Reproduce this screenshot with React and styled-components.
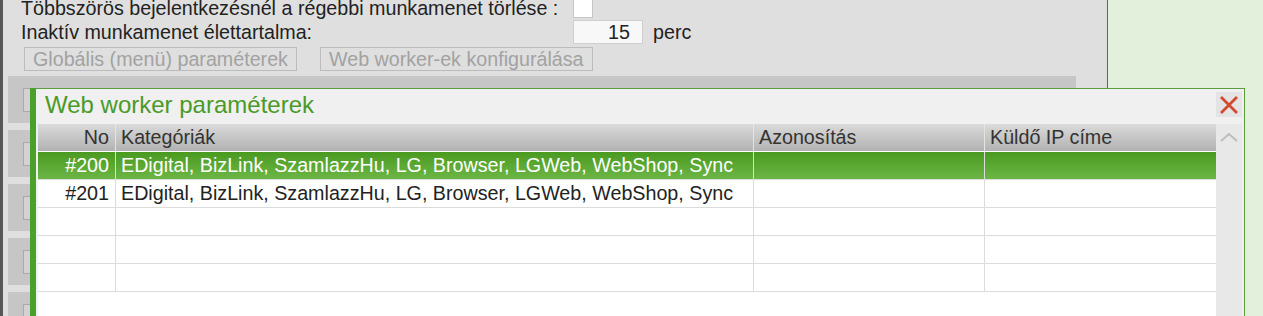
import styled, { createGlobalStyle } from 'styled-components';

const GlobalStyle = createGlobalStyle`
    html, body {
        margin: 0;
        padding: 0;
        overflow: hidden;
    }
    body {
        font-family: 'Liberation Sans', Arial, sans-serif;
        color: #222;
    }
`;

const Page = styled.div`
    position: relative;
    display: flex;
    width: 1263px;
    height: 316px;
    overflow: hidden;
    background: #e2f0dc;
`;

const Strip = styled.div`
    width: 3px;
    flex: none;
    background: #565656;
`;

const Panel = styled.div`
    width: 1105px;
    flex: none;
    background: #dfdfdf;
    border-right: 1px solid #5e6a5e;
    padding-left: 5px;
    box-sizing: border-box;
    display: flex;
    flex-direction: column;
`;

const Form = styled.div`
    margin-top: -4px;
    padding-left: 13px;
    display: grid;
    grid-template-columns: 552px auto;
    grid-auto-rows: 24px;
    align-items: center;
    font-size: 19.7px;
`;

const Label = styled.div`
    white-space: nowrap;
`;

const Field = styled.div`
    display: flex;
    align-items: center;
    gap: 10px;
`;

const Check = styled.div`
    width: 18px;
    height: 18px;
    background: #fff;
    border: 1px solid #c4c4c4;
`;

const NumberBox = styled.div`
    width: 70px;
    height: 24px;
    box-sizing: border-box;
    background: #f8f8f8;
    border: 1px solid #cfcfcf;
    text-align: right;
    padding-right: 12px;
    line-height: 22px;
`;

const Buttons = styled.div`
    display: flex;
    gap: 23px;
    padding: 3px 0 0 16px;
`;

const GhostButton = styled.div`
    height: 24px;
    box-sizing: border-box;
    border: 1px solid #bcbcbc;
    color: #a2a2a2;
    font-size: 19.7px;
    line-height: 22px;
    padding: 0 8px;
    white-space: nowrap;
`;

const Cards = styled.div`
    display: flex;
    flex-direction: column;
    gap: 7px;
    margin-top: 5px;
`;

const Card = styled.div`
    width: 1068px;
    height: 47px;
    flex: none;
    background: #c6c6c6;
    padding: 12px 0 0 15px;
    box-sizing: border-box;
`;

const CardField = styled.div`
    width: 200px;
    height: 24px;
    box-sizing: border-box;
    border: 1px solid #a9a9a9;
    background: #d2d2d2;
`;

const Green = styled.div`
    flex: 1;
`;

const Modal = styled.div`
    position: absolute;
    left: 30px;
    top: 88px;
    width: 1215px;
    height: 240px;
    box-sizing: border-box;
    background: #f0f0f0;
    border-left: 6px solid #4b9f2b;
    border-top: 1px solid #5b9c3c;
    border-right: 1px solid #5b9c3c;
    padding: 0 2px;
    display: flex;
    flex-direction: column;
`;

const TitleBar = styled.div`
    height: 35px;
    flex: none;
    display: flex;
    align-items: center;
    justify-content: space-between;
`;

const Title = styled.div`
    color: #4a9a28;
    font-size: 24px;
    padding-left: 7px;
    margin-top: -3px;
`;

const Close = styled.div`
    width: 26px;
    height: 25px;
    background: #e4e4e4;
    display: flex;
    align-items: center;
    justify-content: center;
    margin-top: -4px;
`;

const Body = styled.div`
    display: flex;
    flex: 1;
`;

const Table = styled.div`
    width: 1178px;
    flex: none;
    background: #fff;
    font-size: 19.7px;
`;

const Row = styled.div`
    display: grid;
    grid-template-columns: 78px 638px 231px 231px;
    height: 28px;
    box-sizing: border-box;
    border-bottom: 1px solid ${({ $head }) => ($head ? '#fff' : '#dcdcdc')};
    background: ${({ $head, $active }) =>
        $head
            ? 'linear-gradient(#dadada, #b2b2b2)'
            : $active
              ? 'linear-gradient(#4a9a20, #6cb646)'
              : '#fff'};
    color: ${({ $head, $active }) => ($head ? '#333' : $active ? '#fff' : '#222')};
`;

const Cell = styled.div`
    line-height: 27px;
    padding: 0 6px 0 5px;
    white-space: nowrap;
    overflow: hidden;
    text-align: ${({ $right }) => ($right ? 'right' : 'left')};
    border-right: 1px solid ${({ $head }) => ($head ? '#e4e4e4' : '#dcdcdc')};
    &:last-child {
        border-right: none;
    }
`;

const Scrollbar = styled.div`
    width: 26px;
    flex: none;
    background: #e8e8e8;
    display: flex;
    justify-content: center;
    padding-top: 8px;
    box-sizing: border-box;
`;

const columns = ['No', 'Kategóriák', 'Azonosítás', 'Küldő IP címe'];
const cats = 'EDigital, BizLink, SzamlazzHu, LG, Browser, LGWeb, WebShop, Sync';
const rows = [
    { no: '#200', cat: cats, active: true },
    { no: '#201', cat: cats },
    {},
    {},
    {},
];

const App = () => (
    <Page>
        <GlobalStyle />
        <Strip />
        <Panel>
            <Form>
                <Label>Többszörös bejelentkezésnél a régebbi munkamenet törlése :</Label>
                <Field>
                    <Check />
                </Field>
                <Label>Inaktív munkamenet élettartalma:</Label>
                <Field>
                    <NumberBox>15</NumberBox>
                    <span>perc</span>
                </Field>
            </Form>
            <Buttons>
                <GhostButton>Globális (menü) paraméterek</GhostButton>
                <GhostButton>Web worker-ek konfigurálása</GhostButton>
            </Buttons>
            <Cards>
                {[0, 1, 2, 3, 4].map((i) => (
                    <Card key={'card' + i}>
                        <CardField />
                    </Card>
                ))}
            </Cards>
        </Panel>
        <Green />
        <Modal>
            <TitleBar>
                <Title>Web worker paraméterek</Title>
                <Close>
                    <svg width="20" height="20" viewBox="0 0 20 20">
                        <path
                            d="M2 2 L18 18 M18 2 L2 18"
                            stroke="#d24a2e"
                            strokeWidth="2.8"
                            fill="none"
                        />
                    </svg>
                </Close>
            </TitleBar>
            <Body>
                <Table>
                    <Row $head>
                        {columns.map((c, i) => (
                            <Cell $head $right={i === 0} key={c}>
                                {c}
                            </Cell>
                        ))}
                    </Row>
                    {rows.map((r, i) => (
                        <Row $active={r.active} key={'row' + i}>
                            <Cell $right>{r.no}</Cell>
                            <Cell>{r.cat}</Cell>
                            <Cell />
                            <Cell />
                        </Row>
                    ))}
                </Table>
                <Scrollbar>
                    <svg width="18" height="10" viewBox="0 0 18 10">
                        <path d="M1 9 L9 2 L17 9" stroke="#bdbdbd" strokeWidth="2" fill="none" />
                    </svg>
                </Scrollbar>
            </Body>
        </Modal>
    </Page>
);

export default App;
